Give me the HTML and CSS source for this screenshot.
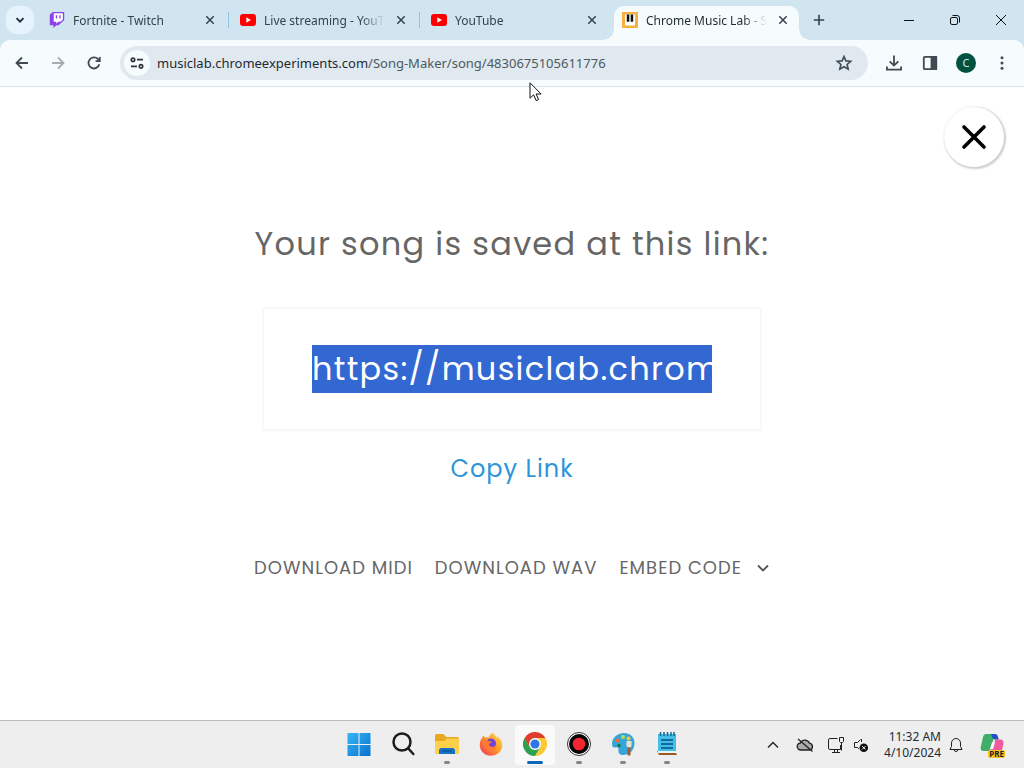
FILE: index.html
```html
<!DOCTYPE html>
<html lang="en">
<head>
  <meta charset="UTF-8">
  <title>Chrome Music Lab - Song Maker</title>
  <link rel="stylesheet" href="styles.css">
</head>

<body>

  <header class="browser">
    <div class="tab-strip">
      <button class="tab-search" type="button" aria-label="Search tabs">
        <svg width="16" height="16" viewBox="0 0 16 16" fill="none" stroke="#1f2a33" stroke-width="1.8"><path d="M4.5 6.2 8 9.7l3.500-3.500"/></svg>
      </button>

      <div class="tab">
        <svg class="favicon" viewBox="0 0 16 16"><path d="M3.600 0 .8 2.800v10.400h3.600V16l2.900-2.800h2.300L15.200 8V0z" fill="#8a43e8"/><path d="M4.700 1.300h9.200v6.200l-2.300 2.300H9.300l-2 2v-2H4.700z" fill="#fff"/><path d="M7.500 3.300v3.300M10.900 3.300v3.300" stroke="#8a43e8" stroke-width="1.300"/></svg>
        <span class="tab-title">Fortnite - Twitch</span>
        <button class="tab-close" type="button" aria-label="Close tab"><svg width="16" height="16" viewBox="0 0 16 16"><path d="m4.300 4.300 7.400 7.400m0-7.400-7.400 7.400"/></svg></button>
      </div>

      <div class="tab">
        <svg class="favicon" viewBox="0 0 16 16"><rect y="2" width="16" height="12" rx="3" fill="#f00"/><path d="m6.300 5.300 4.500 2.700-4.500 2.700z" fill="#fff"/></svg>
        <span class="tab-title">Live streaming - YouTube</span>
        <button class="tab-close" type="button" aria-label="Close tab"><svg width="16" height="16" viewBox="0 0 16 16"><path d="m4.300 4.300 7.400 7.400m0-7.400-7.400 7.400"/></svg></button>
      </div>

      <div class="tab last">
        <svg class="favicon" viewBox="0 0 16 16"><rect y="2" width="16" height="12" rx="3" fill="#f00"/><path d="m6.300 5.300 4.500 2.700-4.500 2.700z" fill="#fff"/></svg>
        <span class="tab-title">YouTube</span>
        <button class="tab-close" type="button" aria-label="Close tab"><svg width="16" height="16" viewBox="0 0 16 16"><path d="m4.300 4.300 7.400 7.400m0-7.400-7.400 7.400"/></svg></button>
      </div>

      <div class="tab active">
        <svg class="favicon" viewBox="0 0 16 16"><path d="M0 0h16v16H0z" fill="#f6b142"/><path d="M3 2.500h10v11H3z" fill="#fff"/><path d="M4.800 2.500h2.500v7.300H4.800zM8.700 2.500h2.500v7.300H8.700z" fill="#111"/></svg>
        <span class="tab-title">Chrome Music Lab - Song Maker</span>
        <button class="tab-close" type="button" aria-label="Close tab"><svg width="16" height="16" viewBox="0 0 16 16"><path d="m4.300 4.300 7.400 7.400m0-7.400-7.400 7.400"/></svg></button>
      </div>

      <button class="new-tab" type="button" aria-label="New tab">
        <svg width="16" height="16" viewBox="0 0 16 16" stroke="#33424d" stroke-width="1.600"><path d="M8 2.800v10.400M2.800 8h10.400"/></svg>
      </button>

      <div class="window-controls">
        <button type="button" aria-label="Minimize"><svg width="12" height="12" viewBox="0 0 12 12"><path d="M1 6.500h10"/></svg></button>
        <button type="button" aria-label="Restore"><svg width="12" height="12" viewBox="0 0 12 12"><rect x="1.500" y="3.500" width="7" height="7" rx="1.500"/><path d="M3.500 1.500H8a2.500 2.500 0 0 1 2.500 2.500v4.500"/></svg></button>
        <button type="button" aria-label="Close"><svg width="12" height="12" viewBox="0 0 12 12"><path d="m1 1 10 10M11 1 1 11"/></svg></button>
      </div>
    </div>

    <div class="toolbar">
      <button class="tool" type="button" aria-label="Back"><svg width="20" height="20" viewBox="0 0 20 20"><path d="M16 10H4.800M10 4.500 4.500 10l5.500 5.500"/></svg></button>
      <button class="tool" type="button" aria-label="Forward" disabled><svg width="20" height="20" viewBox="0 0 20 20"><path d="M4 10h11.200M10 4.500l5.500 5.500-5.500 5.500"/></svg></button>
      <button class="tool" type="button" aria-label="Reload"><svg width="20" height="20" viewBox="0 0 20 20"><path d="M15.300 11.300A5.500 5.500 0 1 1 14 6.200l1.700 1.700M15.800 4v4.200h-4.200"/></svg></button>

      <div class="address-bar">
        <button class="site-info" type="button" aria-label="Site information">
          <svg width="16" height="16" viewBox="0 0 16 16" fill="none" stroke="#2b353c" stroke-width="1.700"><circle cx="4" cy="4.700" r="1.700"/><path d="M8 4.700h6M2 11.300h6"/><circle cx="12" cy="11.300" r="1.700"/></svg>
        </button>
        <div class="url"><span>musiclab.chromeexperiments.com</span>/Song-Maker/song/4830675105611776</div>
        <button class="bookmark" type="button" aria-label="Bookmark this tab">
          <svg width="18" height="18" viewBox="0 0 18 18" fill="none" stroke="#3f4c55" stroke-width="1.600"><path d="m9 2.500 1.900 4.400 4.800.4-3.600 3.200 1.100 4.700L9 12.700l-4.200 2.500 1.100-4.700-3.600-3.200 4.800-.4z"/></svg>
        </button>
      </div>

      <button class="tool" type="button" aria-label="Downloads"><svg width="20" height="20" viewBox="0 0 20 20"><path d="M10 2.500v9.700M5.700 8.300 10 12.600l4.300-4.300M2.900 13.500v3.200h14.200v-3.200"/></svg></button>
      <button class="tool" type="button" aria-label="Side panel"><svg width="20" height="20" viewBox="0 0 20 20"><rect x="3.800" y="3.800" width="12.400" height="12.400" rx="1"/><path d="M11.500 4h4.700v12h-4.700z" fill="#3f4a52"/></svg></button>
      <button class="tool" type="button" aria-label="Profile"><span class="avatar">C</span></button>
      <button class="tool" type="button" aria-label="Menu"><svg width="20" height="20" viewBox="0 0 20 20"><g fill="#3f4a52" stroke="none"><circle cx="10" cy="4.800" r="1.500"/><circle cx="10" cy="10" r="1.500"/><circle cx="10" cy="15.200" r="1.500"/></g></svg></button>
    </div>
  </header>

  <main class="page">
    <button class="close-dialog" type="button" aria-label="Close">
      <svg width="26" height="26" viewBox="0 0 26 26" fill="none" stroke="#000" stroke-width="3.600" stroke-linecap="round"><path d="m3 3 20 20M23 3 3 23"/></svg>
    </button>

    <h1><label for="songLink">Your song is saved at this link:</label></h1>

    <div class="link-box">
      <input type="text" id="songLink" value="https://musiclab.chromeexperiments.com/Song-Maker/song/4830675105611776" readonly>
    </div>

    <a class="copy-link" href="#">Copy Link</a>

    <nav class="exports">
      <a href="#">DOWNLOAD MIDI</a>
      <a href="#">DOWNLOAD WAV</a>
      <a href="#">EMBED CODE
        <svg width="14" height="14" viewBox="0 0 14 14" fill="none" stroke="#555" stroke-width="1.800"><path d="m2 4.500 5 5 5-5"/></svg>
      </a>
    </nav>
  </main>

  <footer class="taskbar">
    <div class="apps">
      <button class="app" type="button" aria-label="Start">
        <svg width="24" height="24" viewBox="0 0 24 24"><defs><linearGradient id="win" x1="0" y1="0" x2="1" y2="1"><stop offset="0" stop-color="#38b6f5"/><stop offset="1" stop-color="#0871cf"/></linearGradient></defs><path d="M.5 1h11v11H.5zM12.500 1h11v11h-11zM.5 13h11v11H.5zM12.500 13h11v11h-11z" fill="url(#win)"/></svg>
      </button>
      <button class="app" type="button" aria-label="Search">
        <svg width="24" height="24" viewBox="0 0 24 24" fill="none" stroke="#1c1c1c" stroke-width="2.500" stroke-linecap="round"><circle cx="11" cy="10" r="8.500"/><path d="m17.300 16.500 5 5.500"/></svg>
      </button>
      <button class="app open" type="button" aria-label="File Explorer">
        <svg width="26" height="24" viewBox="0 0 26 24"><path d="M1 3.500A1.500 1.500 0 0 1 2.500 2h6.800l3 3H23a2 2 0 0 1 2 2v13a2 2 0 0 1-2 2H3a2 2 0 0 1-2-2z" fill="#e9a91d"/><path d="M1 9h9l3-2.500h12V20a2 2 0 0 1-2 2H3a2 2 0 0 1-2-2z" fill="#fdd04b"/><path d="M5 22v-3.500a2.500 2.500 0 0 1 2.500-2.500h11a2.500 2.500 0 0 1 2.500 2.500V22z" fill="#1673c4"/><path d="M8.500 19h9" stroke="#0b559b" stroke-width="1.500"/></svg>
      </button>
      <button class="app" type="button" aria-label="Firefox">
        <svg width="24" height="24" viewBox="0 0 24 24"><defs><linearGradient id="fox" x1="1" y1="0" x2="0" y2="1"><stop offset="0" stop-color="#ffe14a"/><stop offset=".5" stop-color="#ff9428"/><stop offset="1" stop-color="#f02c63"/></linearGradient></defs><path d="M14 .8c1 2.500 3.400 3.500 4.500 5.700l-.2-2.200c3 2.300 4.900 5.200 4.900 9A11.200 10.700 0 0 1 .8 13c0-3.100.8-5.600 2.600-7.500l.8-2.200 1.600 2.300c1.500-.6 2.500-.5 3.800 0C10.200 3.700 11.500 2 14 .8z" fill="url(#fox)"/><circle cx="12" cy="11.500" r="5" fill="#7042d8"/><path d="M4 8.500c2.200-1 4-.5 6 .8l2.800.2c0 1.500-2.300 1.700-3 2.600.3 3.200 5.500 4 7.600.4-.4 4-3 6-6 6-4.500 0-7.400-4.500-7.400-10z" fill="#ff7b31"/></svg>
      </button>
      <button class="app open current" type="button" aria-label="Google Chrome">
        <svg width="24" height="24" viewBox="0 0 24 24"><path d="M12 12V6h10.400A12 12 0 0 1 12 24l5.200-9z" fill="#fcc934"/><path d="M12 12l5.200 3L12 24A12 12 0 0 1 1.600 6l5.200 9z" fill="#2da14e"/><path d="M12 12 6.800 15 1.600 6H12z" fill="#2da14e"/><path d="M1.600 6A12 12 0 0 1 22.400 6H12a6 6 0 0 0-5.200 9z" fill="#e33b2e"/><circle cx="12" cy="12" r="6" fill="#fff"/><circle cx="12" cy="12" r="4.600" fill="#2f76e4"/></svg>
      </button>
      <button class="app open" type="button" aria-label="Recorder">
        <svg width="24" height="24" viewBox="0 0 24 24"><circle cx="12" cy="12" r="11.500" fill="#fff" stroke="#333"/><circle cx="12" cy="12" r="10" fill="#050505"/><circle cx="12" cy="12" r="6.300" fill="#f42532"/></svg>
      </button>
      <button class="app open" type="button" aria-label="Paint">
        <svg width="24" height="24" viewBox="0 0 24 24"><path d="M13 1C6 1 1 6 1 12c0 3 1.500 4 3.500 3.400 2-.6 3.500.4 3 2.600-.6 3 1.600 5 4.500 5 6.500 0 11.500-5 11.500-11.500S19 1 13 1z" fill="#34a6dc"/><circle cx="6.500" cy="8.500" r="2" fill="#f06a35"/><circle cx="12" cy="5" r="2" fill="#b9db4b"/><circle cx="17.500" cy="6.500" r="2" fill="#f9c63b"/><circle cx="8" cy="13.500" r="1.800" fill="#167b4b"/><path d="M15.500 9h5v5l-1 1.500h-3l-1-1.500z" fill="#e8dfcf"/><path d="M16.500 15.500h3V23q-1.500 1.500-3 0z" fill="#a45b28"/></svg>
      </button>
      <button class="app open" type="button" aria-label="Notepad">
        <svg width="24" height="26" viewBox="0 0 24 26"><path d="M2 20h18l2 4H4z" fill="#99591f"/><path d="M3 3h18v19H3z" fill="#43bee7"/><path d="M3 20h18v2H3z" fill="#e8f6fa"/><path d="M5.500 1v4M9 1v4M12.500 1v4M16 1v4M19 1v4" stroke="#136a95" stroke-width="1.500"/><path d="M6 9h12M6 13h12M6 17h12" stroke="#116b9c" stroke-width="1.800"/></svg>
      </button>
    </div>

    <div class="tray">
      <button class="tray-icon" type="button" aria-label="Show hidden icons"><svg width="16" height="16" viewBox="0 0 16 16"><path d="m3 10.500 5-5 5 5" stroke-width="1.400"/></svg></button>
      <button class="tray-icon" type="button" aria-label="OneDrive"><svg width="18" height="16" viewBox="0 0 18 16"><path d="M5 13a3.500 3.500 0 0 1-.6-7A5 5 0 0 1 13.500 6.200 3.500 3.500 0 0 1 14 13z" fill="#aaa" stroke-width="1.300"/><path d="m2 2 14.500 12.500" stroke-width="1.300"/></svg></button>
      <div class="tray-pair">
        <svg width="18" height="18" viewBox="0 0 18 18"><path d="M10.500 2.500H3A1.500 1.500 0 0 0 1.500 4v8A1.500 1.500 0 0 0 3 13.500h10.500V9M5 16.500h8M7.500 13.500v3M10.500 13.500v3M12.500 1.500h4v4l-1 1h-2l-1-1zM14.500 6.500v8"/></svg>
        <svg width="16" height="16" viewBox="0 0 16 16"><path d="M7.500 2.500 4.500 5.500h-3v5h3l1.500 1.500M8.500 2v3"/><circle cx="10.800" cy="10.800" r="4.300" fill="#111" stroke="none"/><path d="m9.200 9.200 3.200 3.200m0-3.200-3.200 3.200" stroke="#fff"/></svg>
      </div>
      <div class="clock">
        <div>11:32 AM</div>
        <div>4/10/2024</div>
      </div>
      <button class="tray-icon bell" type="button" aria-label="Notifications"><svg width="16" height="16" viewBox="0 0 16 16"><path d="M8 1.500a4.500 4.500 0 0 0-4.500 4.500v3.500L2 12.500h12l-1.500-3V6A4.500 4.500 0 0 0 8 1.500zM6.200 12.700a1.800 1.800 0 0 0 3.600 0"/></svg></button>
      <button class="copilot" type="button" aria-label="Copilot">
        <svg width="24" height="24" viewBox="0 0 24 24"><path d="M6 1h9L10.500 16c-.5 1.500-1.500 2-3 2H4c-3 0-4-2-3-5L3 4c.5-2 1.500-3 3-3z" fill="#3fae68"/><path d="M11 1h4c2 0 2.500 1 3 3l.8 2.500h-4C13 6.500 12.500 5 12 3.500z" fill="#2151c4"/><path d="M15.500 6.500H20c3 0 4 2 3.300 5L22 17H9.500c2 0 2.600-1.500 3-3z" fill="#ef5ba1"/><path d="M12 9.500h3L13 16h-3z" fill="#fff"/></svg>
        <span>PRE</span>
      </button>
    </div>
  </footer>

  <svg class="cursor" width="14" height="20" viewBox="0 0 14 20"><path d="M1 .8v15.400l3.600-3.400 2.600 5.800 2.400-1-2.500-5.600h5z" fill="#fff" stroke="#111"/></svg>

  <script>
    const songLink = document.getElementById('songLink');
    songLink.focus();
    songLink.setSelectionRange(0, songLink.value.length);
    songLink.scrollLeft = 0;
  </script>

</body>
</html>
```
FILE: styles.css
```css
* {
  margin: 0;
  padding: 0;
  box-sizing: border-box;
}

body {
  display: flex;
  flex-direction: column;
  min-height: 100vh;
  background: #fff;
  font-family: "Noto Sans", "Open Sans", sans-serif;
  color: #1f2a33;
}

button {
  display: flex;
  align-items: center;
  justify-content: center;
  background: none;
  border: none;
  font-family: inherit;
}

svg {
  flex-shrink: 0;
}

a {
  text-decoration: none;
}

/* Tabs */
.browser {
  background: #d1e5f1;
}

.tab-strip {
  display: flex;
  align-items: center;
  height: 40px;
  padding-left: 6px;
}

.tab-search {
  width: 28px;
  height: 28px;
  margin-right: 4px;
  border-radius: 10px;
  background: #e6f3fc;
}

.tab {
  position: relative;
  display: flex;
  align-items: center;
  align-self: flex-end;
  flex: 0 1 191px;
  min-width: 0;
  height: 34px;
  padding: 0 11px 6px;
}

.tab::after {
  content: "";
  position: absolute;
  right: 0;
  top: 6px;
  width: 1px;
  height: 16px;
  background: #92c4df;
}

.tab.last::after {
  display: none;
}

.favicon {
  width: 16px;
  height: 16px;
  margin-right: 8px;
}

.tab-title {
  flex: 1;
  min-width: 0;
  overflow: hidden;
  white-space: nowrap;
  font-size: 12px;
  line-height: 18px;
  padding-top: 2px;
  color: #33424d;
  -webkit-mask-image: linear-gradient(to right, #000 calc(100% - 24px), transparent);
  mask-image: linear-gradient(to right, #000 calc(100% - 24px), transparent);
}

.tab-close {
  width: 16px;
  height: 16px;
  margin-left: 8px;
}

.tab-close svg {
  stroke: #33424d;
  stroke-width: 1.5;
}

.tab.active {
  flex-basis: 185px;
  margin: 0 4px 0 3px;
  padding: 0 8px 6px;
  background: #f6fbfe;
  border-radius: 10px 10px 0 0;
}

.tab.active .tab-title {
  color: #1f2a33;
}

/* flared feet of the active tab */
.tab.active::before,
.tab.active::after {
  content: "";
  position: absolute;
  top: auto;
  bottom: 0;
  width: 10px;
  height: 10px;
}

.tab.active::before {
  left: -10px;
  background: radial-gradient(circle at 0 0, transparent 9px, #f6fbfe 10px);
}

.tab.active::after {
  right: -10px;
  background: radial-gradient(circle at 100% 0, transparent 9px, #f6fbfe 10px);
}

.new-tab {
  width: 28px;
  height: 28px;
  margin-left: 2px;
}

.window-controls {
  display: flex;
  height: 100%;
  margin-left: auto;
}

.window-controls button {
  width: 46px;
}

.window-controls svg {
  fill: none;
  stroke: #111;
}

/* Toolbar */
.toolbar {
  display: flex;
  align-items: center;
  height: 47px;
  padding: 0 4px;
  background: #f6fbfe;
  border-bottom: 1px solid #d9e2e8;
  border-radius: 10px 10px 0 0;
}

.tool {
  width: 36px;
  height: 36px;
}

.tool svg {
  fill: none;
  stroke: #3f4a52;
  stroke-width: 1.8;
}

.tool:disabled svg {
  stroke: #a4adb3;
}

.address-bar {
  display: flex;
  align-items: center;
  flex: 1;
  min-width: 0;
  height: 34px;
  margin: 0 8px;
  padding: 0 15px 0 4px;
  border-radius: 17px;
  background: #dfe9ef;
}

.site-info {
  width: 26px;
  height: 26px;
  margin-right: 7px;
  border-radius: 50%;
  background: #f6fbfe;
}

.url {
  flex: 1;
  min-width: 0;
  overflow: hidden;
  white-space: nowrap;
  font-size: 13px;
  line-height: 20px;
  color: #4c5961;
}

.url span {
  color: #1f2a33;
}

.avatar {
  width: 20px;
  height: 20px;
  border-radius: 50%;
  background: #00513f;
  color: #d7efe6;
  font-size: 11px;
  line-height: 20px;
}

/* Saved song page */
.page {
  position: relative;
  display: flex;
  flex-direction: column;
  align-items: center;
  flex: 1;
  padding: 133px 20px 40px;
  font-family: Poppins, Inter, sans-serif;
  letter-spacing: 1px;
  color: #666;
}

.close-dialog {
  position: absolute;
  top: 20px;
  right: 20px;
  width: 60px;
  height: 60px;
  border-radius: 50%;
  background: #fff;
  box-shadow: 1px 1px 2px 1px rgba(0, 0, 0, 0.2);
}

h1 {
  font-size: 32px;
  font-weight: 400;
  line-height: 48px;
  letter-spacing: 0.04em;
}

.link-box {
  width: 500px;
  max-width: 100%;
  margin-top: 39px;
  padding: 36px 48px;
  border: 2px solid #f8f8f8;
}

.link-box input {
  display: block;
  width: 100%;
  height: 48px;
  border: none;
  outline: none;
  background: #fff;
  font-family: inherit;
  font-size: 32px;
  line-height: 48px;
  letter-spacing: 0.04em;
  color: #666;
}

.link-box input::selection {
  background: #3367d1;
  color: #fff;
}

.copy-link {
  margin-top: 20px;
  font-size: 24px;
  line-height: 36px;
  color: #2d95d8;
}

.exports {
  display: flex;
  flex-wrap: wrap;
  justify-content: center;
  gap: 22px;
  margin-top: 67px;
}

.exports a {
  display: flex;
  align-items: center;
  gap: 14px;
  font-size: 18px;
  line-height: 28px;
  color: #666;
}

/* Taskbar */
.taskbar {
  display: grid;
  grid-template-columns: 1fr auto 1fr;
  align-items: center;
  height: 48px;
  background: #eee;
  border-top: 1px solid #bdbdbd;
}

.apps {
  grid-column: 2;
  display: flex;
  gap: 4px;
  padding-left: 2px;
}

.app {
  position: relative;
  width: 40px;
  height: 40px;
  padding-bottom: 2px;
  border-radius: 4px;
}

.app.open::after {
  content: "";
  position: absolute;
  bottom: 1px;
  left: 17px;
  width: 6px;
  height: 3px;
  border-radius: 2px;
  background: #858585;
}

.app.current {
  background: #fafafa;
}

.app.current::after {
  left: 12px;
  width: 16px;
  background: #0d66b8;
}

.tray {
  display: flex;
  align-items: center;
  justify-content: flex-end;
  padding-right: 20px;
}

.tray-icon {
  width: 32px;
  height: 32px;
}

.tray-icon svg,
.tray-pair svg {
  fill: none;
  stroke: #222;
}

.tray-pair {
  display: flex;
  align-items: center;
  gap: 8px;
  margin: 0 15px 0 6px;
}

.clock {
  font-size: 12px;
  line-height: 16px;
  text-align: right;
  white-space: nowrap;
}

.bell {
  width: 30px;
}

.copilot {
  position: relative;
  width: 24px;
  height: 24px;
  margin-left: 9px;
}

.copilot span {
  position: absolute;
  right: -1px;
  bottom: -1px;
  padding: 0 1px;
  border-radius: 2px;
  background: #fcc419;
  color: #222;
  font-size: 8px;
  font-weight: bold;
  line-height: 8px;
}

.cursor {
  position: absolute;
  left: 529px;
  top: 82px;
}
```
